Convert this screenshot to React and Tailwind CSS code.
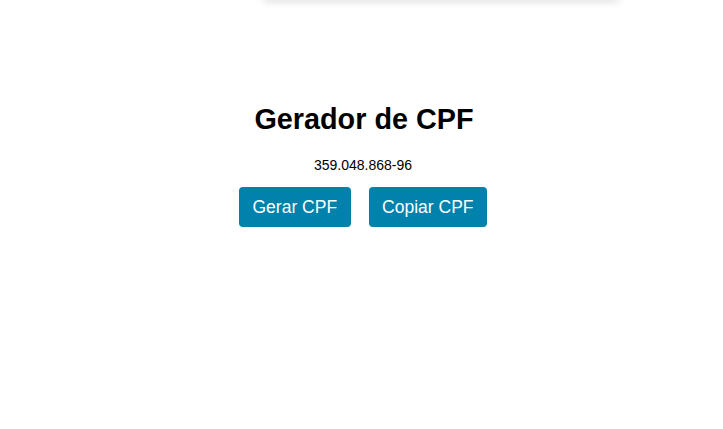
import React from 'react';

export default function App() {
  return (
    <div className="min-h-[429px] bg-white font-['Liberation_Sans',Arial,sans-serif] text-black">
      <div className="mx-auto -mt-[60px] h-[60px] w-[355px] bg-white shadow-[0_2px_8px_rgba(0,0,0,0.12)] translate-x-[80px]" />
      <div className="flex flex-col items-center pt-[103px] pl-[5px]">
        <h1 className="text-[28.8px] font-bold leading-[32px]">Gerador de CPF</h1>
        <p className="mt-[22px] text-[14px] leading-[16px] -translate-x-[1px]">359.048.868-96</p>
        <div className="mt-[14px] flex gap-[18px] -translate-x-[1px]">
          <button className="h-[40px] rounded-[4px] bg-[#0082ad] px-[13.5px] text-[17.5px] text-white">Gerar CPF</button>
          <button className="h-[40px] rounded-[4px] bg-[#0082ad] px-[13.5px] text-[17.5px] text-white">Copiar CPF</button>
        </div>
      </div>
    </div>
  );
}
